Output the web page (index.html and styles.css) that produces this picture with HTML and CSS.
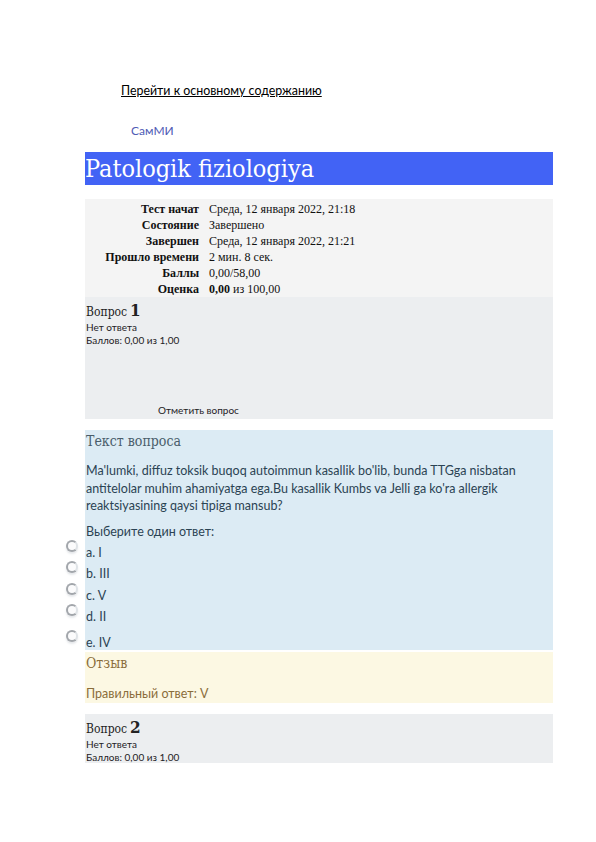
FILE: index.html
```html
<!DOCTYPE html>
<html lang="ru">
<head>
<meta charset="utf-8">
<title>Patologik fiziologiya</title>
<link rel="stylesheet" href="styles.css">
</head>
<body>
<div class="page">
  <a class="skip" href="#main">Перейти к основному содержанию</a>
  <div class="brand">СамМИ</div>
  <h1 class="banner">Patologik fiziologiya</h1>
  <table class="summary">
    <tr><th>Тест начат</th><td>Среда, 12 января 2022, 21:18</td></tr>
    <tr><th>Состояние</th><td>Завершено</td></tr>
    <tr><th>Завершен</th><td>Среда, 12 января 2022, 21:21</td></tr>
    <tr><th>Прошло времени</th><td>2 мин. 8 сек.</td></tr>
    <tr><th>Баллы</th><td>0,00/58,00</td></tr>
    <tr><th>Оценка</th><td><b>0,00</b> из 100,00</td></tr>
  </table>
  <div class="info q1">
    <div class="qno">Вопрос<span class="num">1</span></div>
    <div class="state">Нет ответа</div>
    <div class="grade">Баллов: 0,00 из 1,00</div>
    <div class="flag">Отметить вопрос</div>
  </div>
  <div class="content" id="main">
    <h4 class="ctitle">Текст вопроса</h4>
    <p class="qtext">Ma'lumki, diffuz toksik buqoq autoimmun kasallik bo'lib, bunda TTGga nisbatan antitelolar muhim ahamiyatga ega.Bu kasallik Kumbs va Jelli ga ko'ra allergik reaktsiyasining qaysi tipiga mansub?</p>
    <div class="prompt">Выберите один ответ:</div>
    <div class="answers">
      <div class="opt"><span class="radio"></span><span>a. I</span></div>
      <div class="opt"><span class="radio"></span><span>b. III</span></div>
      <div class="opt"><span class="radio"></span><span>c. V</span></div>
      <div class="opt"><span class="radio"></span><span>d. II</span></div>
      <div class="opt last"><span class="radio"></span><span>e. IV</span></div>
    </div>
  </div>
  <div class="feedback">
    <h4 class="ftitle">Отзыв</h4>
    <div class="right">Правильный ответ: V</div>
  </div>
  <div class="info q2">
    <div class="qno">Вопрос<span class="num">2</span></div>
    <div class="state">Нет ответа</div>
    <div class="grade">Баллов: 0,00 из 1,00</div>
  </div>
</div>
</body>
</html>
```

FILE: styles.css
```css
html, body {
  margin: 0;
  padding: 0;
  background: #ffffff;
}
.page {
  width: 468px;
  margin-left: 85px;
  padding-top: 84px;
  font-family: Lato, "Noto Sans", sans-serif;
  color: #1d2125;
}
.skip {
  display: block;
  margin-left: 36px;
  font-size: 12.4px;
  line-height: 14px;
  color: #000;
  text-decoration: underline;
}
.brand {
  margin-top: 26px;
  margin-left: 46px;
  font-size: 12px;
  line-height: 14px;
  color: #4f5bb5;
}
.banner {
  margin: 14px 0 0 0;
  height: 33px;
  background: #4263f5;
  color: #ffffff;
  font-family: "DejaVu Serif Condensed", "DejaVu Serif", serif;
  font-stretch: condensed;
  font-weight: normal;
  font-size: 25px;
  line-height: 34px;
  padding-left: 0;
}
.summary {
  margin-top: 14px;
  width: 100%;
  border-collapse: collapse;
  background: #f4f4f4;
  font-family: "Liberation Serif", serif;
  font-size: 12px;
  color: #111;
}
.summary tr { height: 16px; }
.summary th {
  width: 114px;
  text-align: right;
  font-weight: bold;
  padding: 0 10px 0 0;
  line-height: 16px;
  white-space: nowrap;
}
.summary td {
  padding: 0;
  line-height: 16px;
}
.summary tr:first-child th, .summary tr:first-child td { padding-top: 2px; }
.info {
  background: #eceef0;
  padding: 4px 0 0 1px;
  font-size: 10px;
  line-height: 13px;
  color: #1d2125;
}
.q1 { height: 118px; display: flex; flex-direction: column; }
.q2 { margin-top: 11px; height: 45px; }
.qno {
  font-family: "DejaVu Serif Condensed", "DejaVu Serif", serif;
  font-stretch: condensed;
  font-size: 12px;
  line-height: 18px;
  color: #222;
}
.num {
  margin-left: 3px;
  font-size: 17px;
  font-weight: bold;
}
.flag {
  margin-top: auto;
  margin-left: 72px;
  margin-bottom: 2px;
  font-size: 10px;
}
.content {
  margin-top: 11px;
  background: #dcebf4;
  padding: 1px 0 0 1px;
  height: 219px;
  color: #2b4353;
}
.ctitle {
  margin: 0;
  font-family: "DejaVu Serif Condensed", "DejaVu Serif", serif;
  font-stretch: condensed;
  font-weight: normal;
  font-size: 14px;
  line-height: 20px;
  color: #4a5d6b;
}
.qtext {
  margin: 11px 0 0 0;
  font-size: 12.5px;
  line-height: 17.5px;
  color: #2b4353;
}
.prompt {
  margin-top: 8px;
  font-size: 12.5px;
  line-height: 17px;
  color: #2b4353;
}
.answers {
  margin-top: 2px;
}
.opt {
  display: flex;
  align-items: center;
  height: 21.5px;
  font-size: 12.5px;
  color: #2b4353;
  position: relative;
}
.opt.last { margin-top: 4px; }
.radio {
  position: absolute;
  left: -20px;
  top: -2px;
  width: 8px;
  height: 8px;
  border-radius: 50%;
  border: 2px solid #a2a6ab;
  border-right-color: #dfe3e7;
  background: #fbfbfc;
  box-shadow: 0 2px 2px rgba(150, 160, 170, 0.25);
}
.feedback {
  margin-top: 2px;
  background: #fcf8e3;
  height: 50px;
  padding: 1px 0 0 1px;
  color: #8a6d3b;
}
.ftitle {
  margin: 0;
  font-family: "DejaVu Serif Condensed", "DejaVu Serif", serif;
  font-stretch: condensed;
  font-weight: normal;
  font-size: 14px;
  line-height: 20px;
  color: #8a6d3b;
}
.right {
  margin-top: 12px;
  font-size: 12.5px;
  line-height: 17px;
}
```
